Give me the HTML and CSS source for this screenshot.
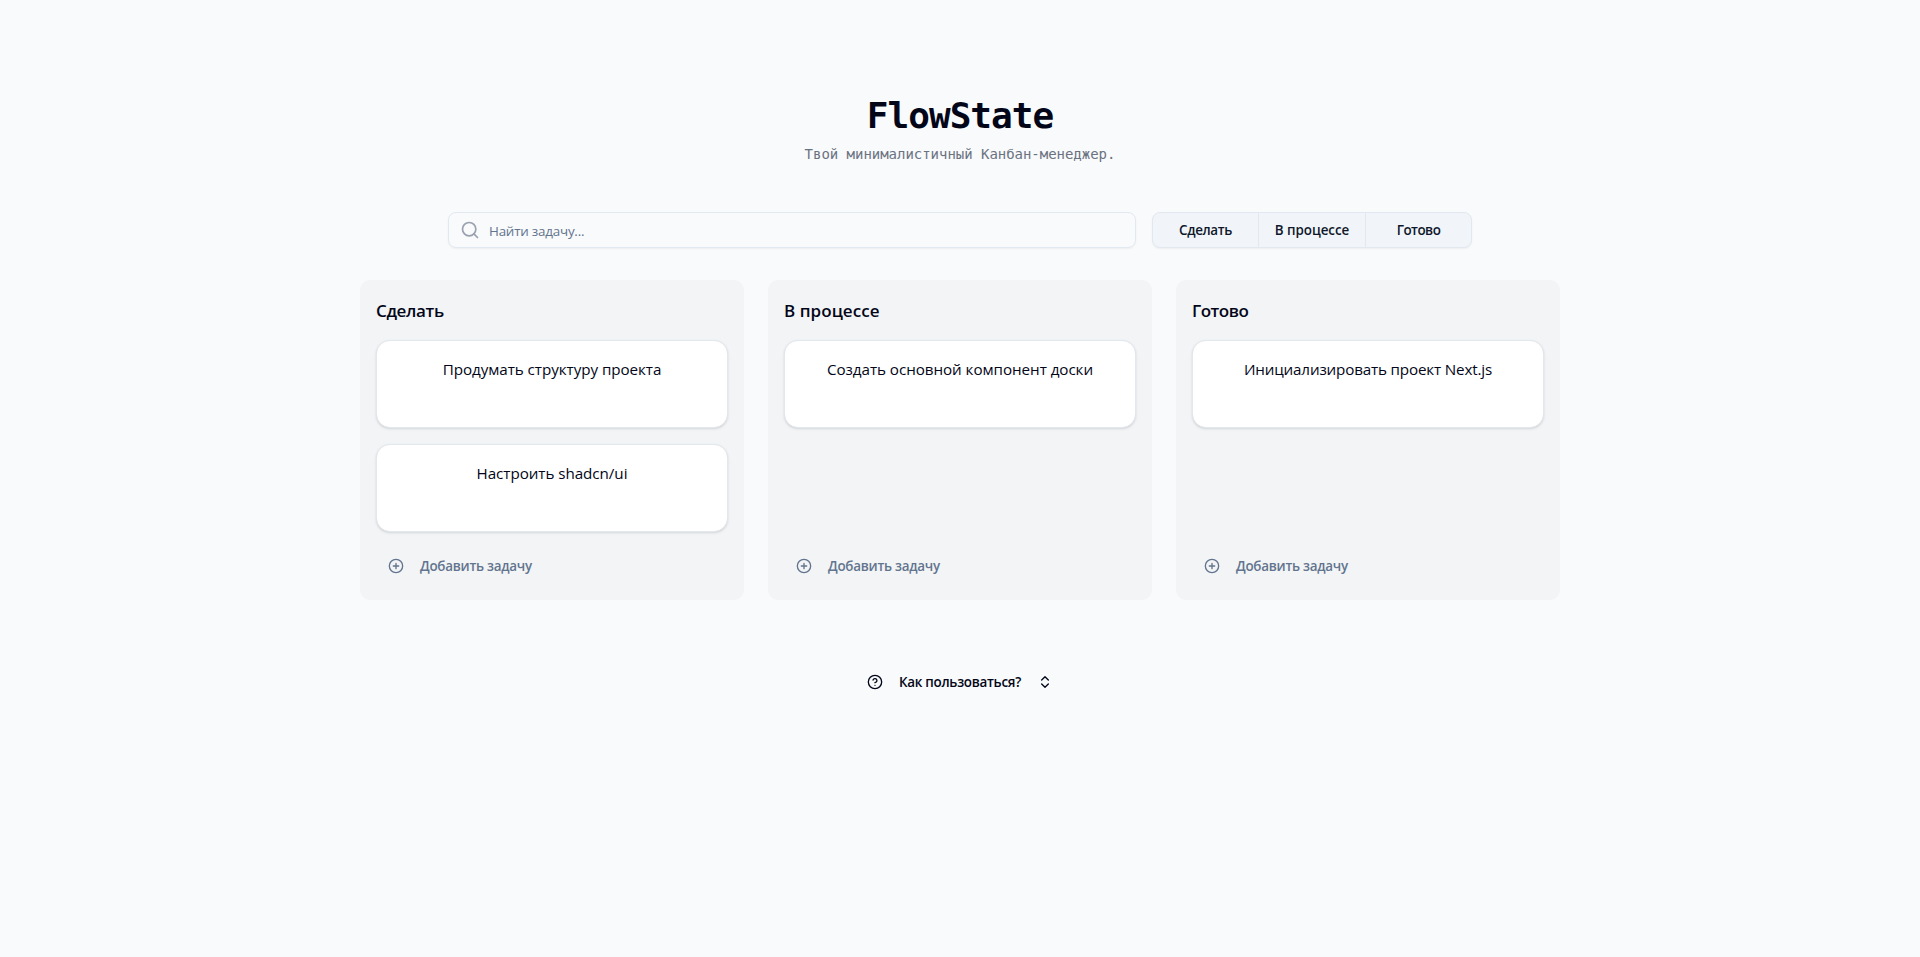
FILE: index.html
```html
<!DOCTYPE html>
<html lang="ru">
<head>
<meta charset="utf-8">
<title>FlowState</title>
<link rel="stylesheet" href="styles.css">
</head>
<body>
<svg class="sprite" aria-hidden="true">
  <symbol id="plus" viewBox="0 0 24 24"><circle cx="12" cy="12" r="10"/><path d="M8 12h8M12 8v8"/></symbol>
</svg>
<main class="page">
  <header class="header">
    <h1 class="title">FlowState</h1>
    <p class="subtitle">Твой минималистичный Канбан-менеджер.</p>
  </header>
  <div class="toolbar">
    <label class="search">
      <svg class="search-icon" viewBox="0 0 24 24"><circle cx="11" cy="11" r="8"/><path d="m21 21-4.3-4.3"/></svg>
      <input class="search-input" type="text" placeholder="Найти задачу...">
    </label>
    <div class="filters">
      <button class="filter tight">Сделать</button>
      <button class="filter">В процессе</button>
      <button class="filter tighter">Готово</button>
    </div>
  </div>
  <div class="board">
    <section class="column">
      <h2 class="column-title tight">Сделать</h2>
      <div class="cards">
        <article class="card">Продумать структуру проекта</article>
        <article class="card">Настроить shadcn/ui</article>
      </div>
      <button class="add"><svg class="icon"><use href="#plus"/></svg><span>Добавить задачу</span></button>
    </section>
    <section class="column">
      <h2 class="column-title">В процессе</h2>
      <div class="cards">
        <article class="card">Создать основной компонент доски</article>
      </div>
      <button class="add"><svg class="icon"><use href="#plus"/></svg><span>Добавить задачу</span></button>
    </section>
    <section class="column">
      <h2 class="column-title tighter">Готово</h2>
      <div class="cards">
        <article class="card snug">Инициализировать проект Next.js</article>
      </div>
      <button class="add"><svg class="icon"><use href="#plus"/></svg><span>Добавить задачу</span></button>
    </section>
  </div>
  <button class="help">
    <svg class="icon" viewBox="0 0 24 24"><circle cx="12" cy="12" r="10"/><path d="M9.09 9a3 3 0 0 1 5.83 1c0 2-3 3-3 3M12 17h.01"/></svg>
    <span>Как пользоваться?</span>
    <svg class="icon" viewBox="0 0 24 24"><path d="m7 15 5 5 5-5M7 9l5-5 5 5"/></svg>
  </button>
</main>
</body>
</html>
```
FILE: styles.css
```css
* { box-sizing: border-box; }
body {
  margin: 0;
  background: #f9fafb;
  color: #020618;
  font-family: "Open Sans", "Noto Sans", sans-serif;
  font-size: 13.4px;
  line-height: 20px;
}
h1, h2, p { margin: 0; }
button {
  margin: 0;
  padding: 0;
  border: 0;
  background: none;
  color: inherit;
  font: inherit;
}
svg {
  flex: none;
  fill: none;
  stroke: currentColor;
  stroke-width: 2;
  stroke-linecap: round;
  stroke-linejoin: round;
}
.sprite { display: none; }
.icon { width: 16px; height: 16px; }
.page {
  display: flex;
  flex-direction: column;
  align-items: center;
  padding-top: 96px;
}
.header {
  display: flex;
  flex-direction: column;
  align-items: center;
  gap: 8px;
  height: 116px;
  font-family: "DejaVu Sans Mono", monospace;
  white-space: nowrap;
}
.title { font-size: 36px; line-height: 40px; font-weight: 700; letter-spacing: -0.95px; }
.subtitle { font-size: 14px; line-height: 20px; color: #6a7282; letter-spacing: -0.03px; }
.toolbar { display: flex; gap: 16px; width: 1024px; height: 36px; }
.search {
  display: flex;
  flex: 1;
  align-items: center;
  gap: 9px;
  padding-left: 11px;
  border: 1px solid #e2e8f0;
  border-radius: 8px;
  box-shadow: 0 1px 2px rgb(0 0 0 / 5%);
}
.search-icon { width: 20px; height: 20px; color: #99a1af; }
.search-input {
  flex: 1;
  padding: 2px 0 0;
  border: 0;
  outline: 0;
  background: none;
  font: inherit;
  letter-spacing: -0.22px;
}
.search-input::placeholder { color: #62748e; opacity: 1; }
.filters {
  display: grid;
  grid-template-columns: 105px 107px 1fr;
  width: 320px;
  border: 1px solid #e2e8f0;
  border-radius: 8px;
  background: #f1f5f9;
  box-shadow: 0 1px 2px rgb(0 0 0 / 5%);
}
.filter { color: #0f172b; font-weight: 600; letter-spacing: -0.05px; }
.filter + .filter { border-left: 1px solid #e2e8f0; }
.board {
  display: grid;
  grid-template-columns: repeat(3, 384px);
  gap: 24px;
  margin-top: 32px;
}
.column {
  display: flex;
  flex-direction: column;
  height: 320px;
  padding: 16px;
  border-radius: 10px;
  background: #f3f4f6;
}
.column-title { height: 44px; padding-top: 1px; font-size: 17px; line-height: 28px; font-weight: 600; letter-spacing: 0.05px; }
.cards { display: flex; flex: 1; flex-direction: column; gap: 16px; }
.card {
  height: 88px;
  padding-top: 16px;
  border: 1px solid #e2e8f0;
  border-radius: 14px;
  background: #fff;
  box-shadow: 0 1px 3px rgb(0 0 0 / 10%), 0 1px 2px -1px rgb(0 0 0 / 10%);
  font-size: 15.2px;
  line-height: 24px;
  letter-spacing: -0.05px;
  text-align: center;
  white-space: nowrap;
}
.add {
  display: flex;
  align-items: center;
  gap: 16px;
  height: 36px;
  padding-left: 12px;
  color: #62748e;
  font-weight: 600;
  letter-spacing: -0.25px;
}
.help {
  display: flex;
  align-items: center;
  gap: 16px;
  height: 36px;
  margin-top: 64px;
  font-weight: 600;
  letter-spacing: -0.27px;
}
.snug { letter-spacing: -0.16px; }
.tight { letter-spacing: -0.35px; }
.tighter { letter-spacing: -0.5px; }
```
